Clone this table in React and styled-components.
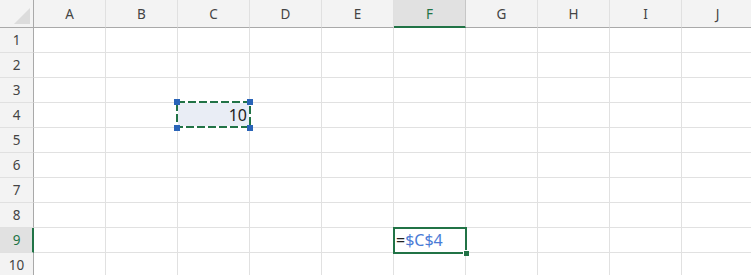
import React from 'react';
import styled, { createGlobalStyle } from 'styled-components';

const GlobalStyle = createGlobalStyle`
  html, body {
    margin: 0;
    padding: 0;
    background: #fff;
    overflow: hidden;
  }
  body {
    font-family: "Noto Sans", "Open Sans", sans-serif;
  }
`;

const COLS = ['A', 'B', 'C', 'D', 'E', 'F', 'G', 'H', 'I', 'J'];
const ROWS = [1, 2, 3, 4, 5, 6, 7, 8, 9, 10];
const GREEN = '#217346';

const Sheet = styled.div`
  display: grid;
  grid-template-columns: 34px repeat(10, 72px);
  grid-template-rows: 28px repeat(10, 25px);
  width: 754px;
`;

const Corner = styled.div`
  position: relative;
  background: #f3f3f3;
  border-right: 1px solid #a9a9a9;
  border-bottom: 1px solid #a9a9a9;
  box-sizing: border-box;
  display: flex;
  align-items: flex-end;
  justify-content: flex-end;
  padding: 0 3px 3px 0;
`;

const Triangle = styled.div`
  width: 16px;
  height: 16px;
  background: #dcdcdc;
  clip-path: polygon(100% 0, 100% 100%, 0 100%);
`;

const ColHead = styled.div`
  box-sizing: border-box;
  background: ${p => (p.$active ? '#e1e1e1' : '#f3f3f3')};
  border-right: 1px solid ${p => (p.$active ? '#c6c6c6' : '#e0e0e0')};
  border-bottom: ${p => (p.$active ? `2px solid ${GREEN}` : '1px solid #a9a9a9')};
  display: flex;
  align-items: center;
  justify-content: center;
  padding-top: ${p => (p.$active ? '1px' : '0')};
  font-size: 13.5px;
  color: ${p => (p.$active ? GREEN : '#444')};
`;

const RowHead = styled.div`
  box-sizing: border-box;
  background: ${p => (p.$active ? '#e1e1e1' : '#f3f3f3')};
  border-right: ${p => (p.$active ? `2px solid ${GREEN}` : '1px solid #a9a9a9')};
  border-bottom: 1px solid #e0e0e0;
  display: flex;
  align-items: center;
  justify-content: center;
  padding-left: ${p => (p.$active ? '1px' : '0')};
  font-size: 13.5px;
  color: ${p => (p.$active ? GREEN : '#444')};
`;

const Cell = styled.div`
  position: relative;
  z-index: ${p => (p.$raised ? 2 : 0)};
  box-sizing: border-box;
  border-right: 1px solid #e1e1e1;
  border-bottom: 1px solid #e1e1e1;
  background: ${p => (p.$copied ? '#e9edf5' : '#fff')};
  display: flex;
  align-items: center;
  justify-content: ${p => (p.$right ? 'flex-end' : 'flex-start')};
  padding: 0 2px 0 2px;
  font-size: 16px;
  color: #222;
`;

const Ants = styled.svg`
  position: absolute;
  left: -2px;
  top: -2px;
  width: 75px;
  height: 27px;
  overflow: visible;
  pointer-events: none;
`;

const Handle = styled.div`
  position: absolute;
  width: 6px;
  height: 6px;
  background: #2a64b8;
  ${p => (p.$top ? 'top: -4px;' : 'bottom: -4px;')}
  ${p => (p.$left ? 'left: -4px;' : 'right: -4px;')}
`;

const Active = styled.div`
  position: absolute;
  left: -1px;
  top: -1px;
  right: -2px;
  bottom: -2px;
  border: 2px solid ${GREEN};
  pointer-events: none;
`;

const FillHandle = styled.div`
  position: absolute;
  right: -4px;
  bottom: -4px;
  width: 5px;
  height: 5px;
  background: ${GREEN};
  border-left: 1px solid #fff;
  border-top: 1px solid #fff;
`;

const Ref = styled.span`
  color: #4a7bd6;
`;

function CopiedCell() {
  return (
    <Cell $copied $right $raised>
      10
      <Ants viewBox="0 0 75 27">
        <rect x="1" y="1" width="73" height="25" fill="none" stroke="#fff" strokeWidth="2" />
        <rect x="1" y="1" width="73" height="25" fill="none" stroke={GREEN} strokeWidth="2" strokeDasharray="8 3" />
      </Ants>
      <Handle $top $left />
      <Handle $top />
      <Handle $left />
      <Handle />
    </Cell>
  );
}

function FormulaCell() {
  return (
    <Cell $raised>
      =<Ref>$C$4</Ref>
      <Active>
        <FillHandle />
      </Active>
    </Cell>
  );
}

export default function App() {
  return (
    <>
      <GlobalStyle />
      <Sheet>
        <Corner>
          <Triangle />
        </Corner>
        {COLS.map(c => (
          <ColHead key={c} $active={c === 'F'}>{c}</ColHead>
        ))}
        {ROWS.map(r => (
          <React.Fragment key={r}>
            <RowHead $active={r === 9}>{r}</RowHead>
            {COLS.map(c => {
              if (c === 'C' && r === 4) return <CopiedCell key={c} />;
              if (c === 'F' && r === 9) return <FormulaCell key={c} />;
              return <Cell key={c} />;
            })}
          </React.Fragment>
        ))}
      </Sheet>
    </>
  );
}
